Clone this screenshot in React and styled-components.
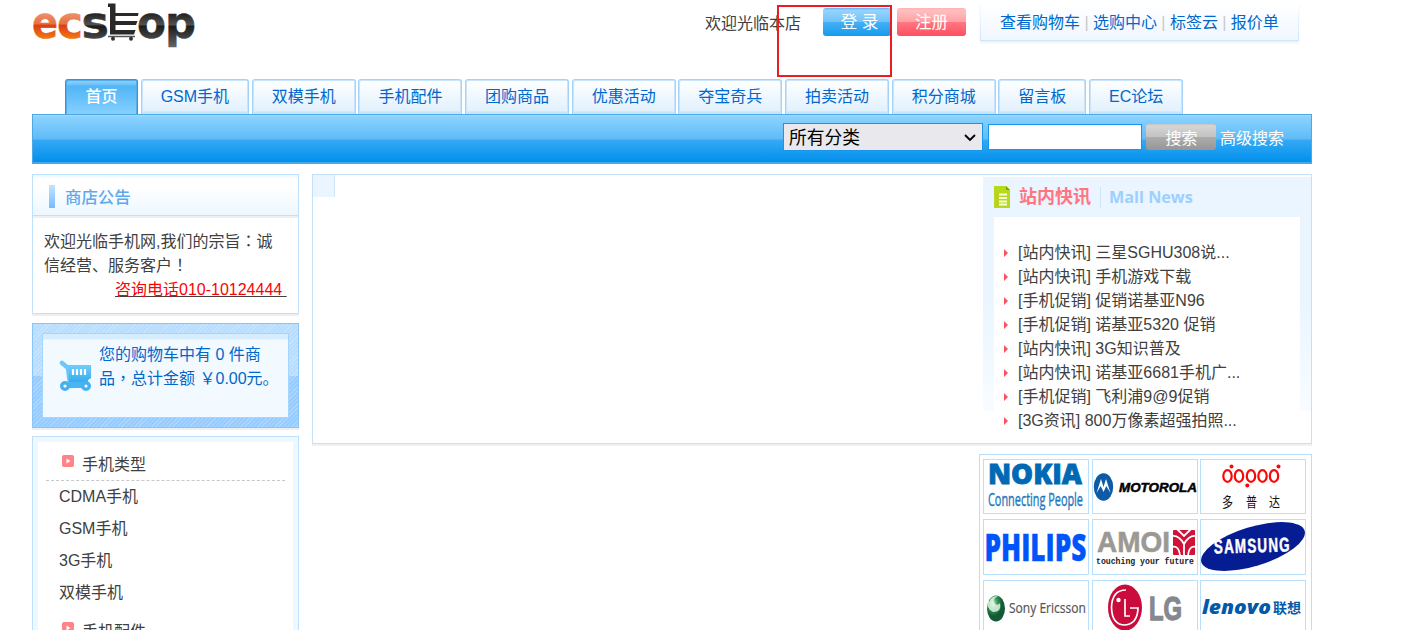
import React from 'react';
import styled, { createGlobalStyle, css } from 'styled-components';

const GlobalStyle = createGlobalStyle`
  *, *::before, *::after { box-sizing: border-box; }
  body {
    margin: 0;
    background: #fff;
    color: #404040;
    font: 16px/24px "Liberation Sans", "Noto Sans CJK SC", sans-serif;
    overflow: hidden;
  }
  ul { list-style: none; margin: 0; padding: 0; }
  a { color: inherit; text-decoration: none; }
`;

const Page = styled.div`
  position: relative;
  width: 1280px;
  height: 630px;
  margin-left: 32px;
  overflow: hidden;
  white-space: nowrap;
`;

/* ---------- header ---------- */
const Header = styled.header`
  display: flex;
  justify-content: space-between;
  align-items: flex-start;
  height: 79px;
  padding-right: 13px;
`;
const LogoSvg = styled.svg`
  display: block;
  overflow: visible;
`;
const UserArea = styled.div`
  display: flex;
  align-items: flex-start;
`;
const Welcome = styled.span`
  margin: 12px 22px 0 0;
`;
const PillButton = styled.button`
  width: ${p => p.$width}px;
  height: 28px;
  margin: 8px ${p => p.$gap}px 0 0;
  padding: 0 0 0 ${p => p.$indent || 0}px;
  border: 0;
  border-radius: 3px;
  color: #fff;
  font: 16.5px/28px "Liberation Sans", "Noto Sans CJK SC", sans-serif;
  background: ${p => p.$tone === 'red'
    ? 'linear-gradient(#ffb0b3 0, #ffc0c1 2px, #ff9fa4 50%, #ff7782 51%, #ff4e60 100%)'
    : 'linear-gradient(#58b5f5 0, #97d4ff 2px, #6fc2f9 50%, #45aff4 51%, #149bee 100%)'};
`;
const QuickLinks = styled.nav`
  width: 319px;
  height: 38px;
  margin-top: 3px;
  padding: 8px 0 0 19px;
  border: solid #d3e9fc;
  border-width: 0 1px 1px;
  border-image: linear-gradient(#fff, #cde6fb) 1;
  background: linear-gradient(#fff, #f0f7ff);
  box-shadow: 0 2px 2px #f1f1f1;
  color: #0068cc;
  line-height: 23px;
`;
const Divider = styled.span`
  margin: 0 4.4px;
  color: #c8c8c8;
`;

/* ---------- navigation ---------- */
const Tabs = styled.nav`
  display: flex;
  gap: 2.67px;
  height: 35px;
  padding-left: 33px;
`;
const Tab = styled.a`
  width: ${p => p.$width}px;
  height: 35px;
  border: solid #a3d2fb;
  border-width: 1px 1px 0;
  border-radius: 3px 3px 0 0;
  background: linear-gradient(#fff, #e2f1fe 31px, #c5e4fd 32px);
  box-shadow: inset 1px 1px 0 #c9e5fd, inset -1px 0 0 #c9e5fd;
  color: #0068cc;
  line-height: 34px;
  text-align: center;
  ${p => p.$active && css`
    border-color: #3394dc;
    background: linear-gradient(#92d3ff 0, #6bc1f9 5px, #50b5f6 6px, #86d0ff 100%);
    box-shadow: inset 1px 1px 0 #55aeec, inset -1px 0 0 #55aeec;
    color: #fff;
    font-weight: 500;
  `}
`;
const SearchBar = styled.form`
  display: flex;
  justify-content: flex-end;
  height: 50px;
  padding-right: 27px;
  border: 1px solid #4ca9e4;
  border-bottom: 2px solid #48a8e8;
  background: linear-gradient(#a3dbff 0, #8ad2ff 2px, #5fbbf7 24px, #35a9f5 25px, #0190ec 100%);
  color: #fff;
`;
const CategorySelect = styled.div`
  display: flex;
  justify-content: space-between;
  align-items: center;
  width: 200px;
  height: 28px;
  margin: 8px 5px 0 0;
  padding: 2px 5px 0;
  border: 1px solid #1896ec;
  background: #e9e9ed;
  color: #000;
  font-size: 17.8px;
`;
const SearchInput = styled.input`
  width: 154px;
  height: 26px;
  margin: 9px 4px 0 0;
  padding: 0;
  border: 1px solid #1896ec;
  background: #fff;
`;
const SearchButton = styled.button`
  width: 70px;
  height: 26px;
  margin: 9px 4px 0 0;
  padding: 0 0 0 1px;
  border: 0;
  border-radius: 3px;
  background: linear-gradient(#c5c5c5, #d5d5d5 2px, #c2c2c2 50%, #acacac 51%, #969696);
  color: #fff;
  font: 16px/26px "Noto Sans CJK SC", sans-serif;
`;
const AdvancedLink = styled.a`
  margin-top: 12px;
`;

/* ---------- columns ---------- */
const Columns = styled.main`
  display: flex;
  gap: 13px;
  margin-top: 10px;
`;
const Sidebar = styled.aside`
  width: 267px;
`;
const Punct = styled.span`
  font-family: "Noto Sans CJK TC", sans-serif;
  line-height: 1;
`;
const Notice = styled.section`
  height: 140px;
  margin-bottom: 9px;
  border: 1px solid #c0e1fd;
  box-shadow: 0 2px 0 #efefef;
`;
const NoticeTitle = styled.h3`
  display: flex;
  align-items: center;
  height: 41px;
  margin: 0;
  padding: 4px 0 0 16px;
  border-bottom: 1px solid #c0e1fd;
  background: linear-gradient(#edf7ff 0, #fff 4px, #fff 30%, #edf7ff 100%);
  box-shadow: 0 2px 0 #efefef;
  color: #5ca9ee;
  font-size: 16.4px;
  font-weight: 500;
`;
const TitleBar = styled.i`
  width: 6px;
  height: 23px;
  margin: -2px 10px 0 0;
  background: linear-gradient(#c4e3ff, #76bcfb);
`;
const NoticeText = styled.p`
  margin: 0;
  padding: 14px 11px;
`;
const Phone = styled.a`
  display: block;
  width: 172px;
  margin-left: auto;
  color: #f00;
  text-decoration: underline #404040;
  white-space: pre;
`;
const Cart = styled.section`
  height: 105px;
  margin-bottom: 8px;
  padding: 9px;
  border: 1px solid #88c5fb;
  background:
    repeating-linear-gradient(135deg, rgba(255,255,255,.22) 0 1px, transparent 1px 3px),
    linear-gradient(#b8ddff 0 50%, #96ccff 50%);
  box-shadow: 0 2px 0 #efefef;
`;
const CartInner = styled.div`
  display: flex;
  height: 85px;
  padding: 9px 0 0 16px;
  border: 1px solid #a5d4fc;
  background: linear-gradient(#d5edff 0 5px, #f2f9ff 6px);
  color: #0068cc;
`;
const CartIcon = styled.svg`
  flex: none;
  width: 34px;
  height: 32px;
  margin: 17px 6px 0 0;
`;
const CategoryPanel = styled.section`
  height: 260px;
  padding: 6px 13px;
  border: 1px solid #c0e1fd;
  background: #fff;
  box-shadow: inset 0 0 0 5px #eff8ff;
`;
const CategoryHead = styled.div`
  display: flex;
  height: 33px;
  margin-top: ${p => p.$top}px;
  padding: 1px 0 0 16px;
  border-bottom: 1px dashed #c8c8c8;
  line-height: 32px;
`;
const PlayIcon = styled.svg`
  margin: 6px 8px 0 0;
`;
const CategoryList = styled.ul`
  padding-left: 13px;
  line-height: 32px;
`;

/* ---------- content ---------- */
const Content = styled.div`
  width: 1000px;
`;
const Feature = styled.section`
  display: flex;
  justify-content: space-between;
  height: 270px;
  border: 1px solid #c5e1f8;
  box-shadow: 0 2px 0 #f0f0f0;
`;
const Slide = styled.div`
  width: 22px;
  height: 22px;
  border-right: 1px solid #cfe7fb;
  background: #eaf5ff;
`;
const News = styled.div`
  width: 328px;
  height: 234px;
  margin-top: 2px;
  padding: 0 11px;
  background: linear-gradient(#eaf5ff, #eaf6ff 55%, #f8fcff);
`;
const NewsTitle = styled.h3`
  display: flex;
  align-items: center;
  height: 40px;
  margin: 0;
  color: #ff7580;
  font-size: 18px;
  font-weight: 700;
`;
const NewsEnglish = styled.span`
  margin-left: 9px;
  padding-left: 8px;
  border-left: 1px solid #cfe5f8;
  color: #9dd0fd;
  font: 700 16.2px/21px "Open Sans", sans-serif;
`;
const NewsList = styled.ul`
  height: 216px;
  padding: 24px 0 0 10px;
  background: #fff;
`;
const NewsItem = styled.li`
  display: flex;
  align-items: center;
  height: 24px;
  &::before {
    content: "";
    margin-right: 10px;
    border: solid transparent;
    border-width: 4px 0 4px 4px;
    border-left-color: #ff5062;
  }
`;
const Brands = styled.section`
  display: grid;
  grid-template-columns: repeat(3, 106px);
  grid-template-rows: 55px 56px 56px;
  gap: 5px 2.6px;
  width: 333px;
  height: 190px;
  margin: 10px 0 0 auto;
  padding: 4px 3px;
  border: 1px solid #b9dffb;
`;
const Brand = styled.a`
  border: 1px solid #b9dffb;
  svg { display: block; width: 104px; height: 53px; overflow: visible; }
`;

/* marker frame lying over the header */
const Marker = styled.div`
  position: absolute;
  left: 745px;
  top: 5px;
  width: 115px;
  height: 72px;
  border: 2px solid #ec1c24;
`;

const tabs = [
  ['首页', 73], ['GSM手机', 108.45], ['双模手机', 104], ['手机配件', 104],
  ['团购商品', 104], ['优惠活动', 104], ['夺宝奇兵', 104], ['拍卖活动', 104],
  ['积分商城', 104], ['留言板', 88], ['EC论坛', 94.2],
];
const news = [
  '[站内快讯] 三星SGHU308说...', '[站内快讯] 手机游戏下载', '[手机促销] 促销诺基亚N96',
  '[手机促销] 诺基亚5320 促销', '[站内快讯] 3G知识普及', '[站内快讯] 诺基亚6681手机广...',
  '[手机促销] 飞利浦9@9促销', '[3G资讯] 800万像素超强拍照...',
];
const quick = ['查看购物车', '选购中心', '标签云', '报价单'];

/* One word of a logo, fitted to a given width and stretched vertically. */
const Word = ({ x, y, w, size, sy = 1, rotate = 0, children, ...rest }) => (
  <text transform={`translate(${x} ${y}) rotate(${rotate}) scale(1 ${sy})`} fontSize={size} textLength={w}
    lengthAdjust="spacingAndGlyphs" {...rest}>{children}</text>
);

const Logo = () => (
  <LogoSvg width="170" height="52" viewBox="0 0 170 52">
    <defs>
      <linearGradient id="lo" x1="0" y1="12" x2="0" y2="39" gradientUnits="userSpaceOnUse" gradientTransform="translate(0 -38.5)">
        <stop offset="0" stopColor="#ee9478" /><stop offset=".45" stopColor="#e8703c" /><stop offset=".5" stopColor="#dd3d14" /><stop offset="1" stopColor="#f07a14" />
      </linearGradient>
      <linearGradient id="lk" x1="0" y1="12" x2="0" y2="48" gradientUnits="userSpaceOnUse" gradientTransform="translate(0 -38.5)">
        <stop offset="0" stopColor="#1c1c1c" /><stop offset=".35" stopColor="#505050" /><stop offset=".4" stopColor="#1c1c1c" /><stop offset="1" stopColor="#666" />
      </linearGradient>
    </defs>
    <g fontFamily="DejaVu Sans" fontWeight="700" strokeWidth=".5">
      <Word x={0} y={38.3} w={26} size={45} fill="url(#lo)" stroke="url(#lo)">e</Word>
      <Word x={25} y={38.3} w={26} size={45} fill="url(#lo)" stroke="url(#lo)">c</Word>
      <Word x={49.5} y={38.3} w={27.5} size={45} fill="url(#lk)" stroke="url(#lk)">s</Word>
      <Word x={105} y={38.3} w={29} size={45} fill="url(#lk)" stroke="url(#lk)">o</Word>
      <Word x={133} y={38.3} w={31} size={45} sy={0.98} fill="url(#lk)" stroke="url(#lk)">p</Word>
    </g>
    <path d="M76 3.500H83.500V13H106.500L106 16H83.500V21H105.500L104 25H83.500V30H103.500L102 34.500H78V7H76Z" fill="#292929" />
    <path d="M76 36.500H103" stroke="#555" strokeWidth="1.500" />
    <circle cx="81" cy="38.800" r="2" fill="#333" /><circle cx="99" cy="38.800" r="2" fill="#333" />
  </LogoSvg>
);

const Nokia = () => (
  <svg viewBox="0 0 104 53">
    <Word x={4} y={24} w={94} size={27} sy={1.02} fill="#0069b4" stroke="#0069b4" strokeWidth=".8" fontFamily="Open Sans" fontWeight="800">NOKIA</Word>
    <Word x={4} y={46} w={95} size={14} sy={1.35} fill="#2479bb" stroke="#2479bb" strokeWidth=".3" fontFamily="Open Sans">Connecting People</Word>
  </svg>
);
const Motorola = () => (
  <svg viewBox="0 0 104 53">
    <ellipse cx="10.5" cy="27" rx="9.7" ry="13.7" fill="#0d5ba6" />
    <path d="M3.500 33L8 19L10.500 27L13 19L17.500 33L13.300 26L10.500 32L7.700 26Z" fill="#fff" />
    <Word x={26} y={31.5} w={78} size={13} fill="#000" stroke="#000" strokeWidth=".5" fontFamily="Liberation Sans" fontWeight="700" fontStyle="italic">MOTOROLA</Word>
  </svg>
);
const Dopod = () => (
  <svg viewBox="0 0 104 53">
    <g fill="none" stroke="#fa0808" strokeWidth="2.2">
      {[26.5, 38, 50, 61.5, 73].map(x => <ellipse key={x} cx={x} cy="16" rx="4.2" ry="5.800" />)}
    </g>
    <g fill="#fa0808"><circle cx="30.500" cy="6.500" r="2" /><circle cx="46.300" cy="25.500" r="2" /><circle cx="77.500" cy="6.500" r="2" /></g>
    <g fontFamily="Noto Sans CJK SC" fill="#111">
      <Word x={21} y={46.8} w={11} size={11} sy={1.25}>多</Word>
      <Word x={45} y={46.8} w={11} size={11} sy={1.25}>普</Word>
      <Word x={68} y={46.8} w={11} size={11} sy={1.25}>达</Word>
    </g>
  </svg>
);
const Philips = () => (
  <svg viewBox="0 0 104 53">
    <Word x={0.5} y={41.2} w={102} size={30} sy={1.26} fill="#0055fa" stroke="#0055fa" strokeWidth=".3" fontFamily="Open Sans" fontWeight="800">PHILIPS</Word>
  </svg>
);
const Amoi = () => (
  <svg viewBox="0 0 104 53">
    <Word x={4} y={32} w={73} size={30} fill="#9c9994" stroke="#9c9994" strokeWidth=".6" fontFamily="Liberation Sans" fontWeight="700">AMOI</Word>
    <rect x="80" y="10" width="22" height="25" rx="1" fill="#d01238" />
    <path d="M79 16Q86 15 91 24Q96 15 103 16M91 23V36M84 9L91 16L98 9M79 27Q86 25 87 36M103 27Q96 25 95 36" fill="none" stroke="#fff" strokeWidth="1.800" />
    <Word x={3} y={44} w={98} size={9} fill="#222" fontFamily="Liberation Mono" fontWeight="700">touching your future</Word>
  </svg>
);
const Samsung = () => (
  <svg viewBox="0 0 104 53">
    <ellipse cx="52" cy="26.500" rx="54" ry="19.500" transform="rotate(-17 52 26.500)" fill="#061c92" />
    <Word x={13} y={33.5} w={77} size={17} sy={1.18} rotate={-1.5} fill="#fff" stroke="#fff" strokeWidth=".4" letterSpacing="1.500" fontFamily="Liberation Sans" fontWeight="700">SAMSUNG</Word>
  </svg>
);
const SonyEricsson = () => (
  <svg viewBox="0 0 104 53">
    <defs><radialGradient id="se" cx=".35" cy=".3"><stop offset="0" stopColor="#c9f1c8" /><stop offset=".45" stopColor="#3c9a5a" /><stop offset="1" stopColor="#125a36" /></radialGradient></defs>
    <ellipse cx="12" cy="27.500" rx="9" ry="13" fill="url(#se)" />
    <path d="M5 17Q1 27 9 31Q18 31 16 22Q14 25 11 23Q7 19 14 15Q8 14 5 21Z" fill="#e9faec" opacity=".8" />
    <Word x={25} y={31.5} w={77} size={14.5} fill="#555" stroke="#555" strokeWidth=".2" fontFamily="Open Sans">Sony Ericsson</Word>
  </svg>
);
const Lg = () => (
  <svg viewBox="0 0 104 53">
    <ellipse cx="32" cy="26.500" rx="17" ry="23" fill="#ca0b3b" />
    <path d="M33 9Q19 9 18.500 26.500Q19 44 32 44Q44.500 43 45 27H37M32 18V35H37" fill="none" stroke="#fff" strokeWidth="1.700" />
    <circle cx="25.500" cy="19" r="2.200" fill="#fff" />
    <Word x={56} y={38.5} w={33} size={26} sy={1.25} fill="#85898d" stroke="#85898d" strokeWidth="1" fontFamily="Liberation Sans" fontWeight="700">LG</Word>
  </svg>
);
const Lenovo = () => (
  <svg viewBox="0 0 104 53">
    <Word x={1} y={32.5} w={69} size={20} fill="#005aa9" fontFamily="Open Sans" fontWeight="800" fontStyle="italic">lenovo</Word>
    <Word x={72} y={32} w={28} size={14} fill="#005aa9" fontFamily="Noto Sans CJK SC" fontWeight="700">联想</Word>
  </svg>
);
const brands = [Nokia, Motorola, Dopod, Philips, Amoi, Samsung, SonyEricsson, Lg, Lenovo];

const Section = ({ top, name, items }) => (
  <>
    <CategoryHead $top={top}>
      <PlayIcon width="12" height="12"><rect width="12" height="12" rx="2" fill="#ff8488" /><path d="M4.500 3.500L8.500 6L4.500 8.500Z" fill="#fff" /></PlayIcon>
      {name}
    </CategoryHead>
    <CategoryList>{items.map(i => <li key={i}>{i}</li>)}</CategoryList>
  </>
);

export default function App() {
  return (
    <Page>
      <GlobalStyle />
      <Header>
        <Logo />
        <UserArea>
          <Welcome>欢迎光临本店</Welcome>
          <PillButton $width={68} $gap={6} $indent={5}>登 录</PillButton>
          <PillButton $width={69} $gap={14} $tone="red">注册</PillButton>
          <QuickLinks>
            {quick.map((q, i) => (
              <React.Fragment key={q}>{i > 0 && <Divider>|</Divider>}<a>{q}</a></React.Fragment>
            ))}
          </QuickLinks>
        </UserArea>
      </Header>
      <Tabs>
        {tabs.map(([name, width], i) => <Tab key={name} $width={width} $active={i === 0}>{name}</Tab>)}
      </Tabs>
      <SearchBar>
        <CategorySelect>
          所有分类
          <svg width="14" height="10"><path d="M2 2L7 7L12 2" fill="none" stroke="#000" strokeWidth="1.900" /></svg>
        </CategorySelect>
        <SearchInput />
        <SearchButton type="button">搜索</SearchButton>
        <AdvancedLink>高级搜索</AdvancedLink>
      </SearchBar>
      <Columns>
        <Sidebar>
          <Notice>
            <NoticeTitle><TitleBar />商店公告</NoticeTitle>
            <NoticeText>
              欢迎光临手机网,我们的宗旨<Punct lang="zh-TW">：</Punct>诚<br />信经营、服务客户<Punct lang="zh-TW">！</Punct>
              <Phone>{'咨询电话010-10124444 '}</Phone>
            </NoticeText>
          </Notice>
          <Cart>
            <CartInner>
              <CartIcon viewBox="0 0 34 32">
                <defs><linearGradient id="ct" x1="0" y1="0" x2="0" y2="1"><stop offset="0" stopColor="#70cdfb" /><stop offset="1" stopColor="#2fabee" /></linearGradient></defs>
                <path d="M3 3L9 8L11 24" fill="none" stroke="#6cc8f8" strokeWidth="4.500" strokeLinecap="round" />
                <path d="M9 5H32V18L29 20V23H10Z" fill="url(#ct)" />
                <path d="M14 9V15M18 9V15M22 9V15M26 9V15" stroke="#fff" strokeWidth="2.200" />
                <path d="M7 25H27" stroke="#49b6f2" strokeWidth="6" />
                <g fill="#fff" stroke="#45b2f0" strokeWidth="3.400"><circle cx="6" cy="26" r="3.300" /><circle cx="27" cy="26" r="3.300" /></g>
              </CartIcon>
              <div>您的购物车中有 0 件商<br />品<Punct lang="zh-TW">，</Punct>总计金额 ￥0.00元。</div>
            </CartInner>
          </Cart>
          <CategoryPanel>
            <Section top={5} name="手机类型" items={['CDMA手机', 'GSM手机', '3G手机', '双模手机']} />
            <Section top={6} name="手机配件" items={[]} />
          </CategoryPanel>
        </Sidebar>
        <Content>
          <Feature>
            <Slide />
            <News>
              <NewsTitle>
                <svg width="25" height="22"><path d="M0 0H12L16 4V22H0Z" fill="#b5d91c" /><path d="M12 0L16 4H12Z" fill="#7fa608" /><path d="M5 8.500H13M5 12H13M5 15.500H13M5 18.500H13" stroke="#fbffd8" strokeWidth="1.800" /><path d="M2.500 8.500H4M2.500 12H4M2.500 15.500H4M2.500 18.500H4" stroke="#e9a04a" strokeWidth="1.500" /></svg>
                站内快讯
                <NewsEnglish>Mall News</NewsEnglish>
              </NewsTitle>
              <NewsList>{news.map(n => <NewsItem key={n}>{n}</NewsItem>)}</NewsList>
            </News>
          </Feature>
          <Brands>{brands.map((B, i) => <Brand key={i}><B /></Brand>)}</Brands>
        </Content>
      </Columns>
      <Marker />
    </Page>
  );
}
